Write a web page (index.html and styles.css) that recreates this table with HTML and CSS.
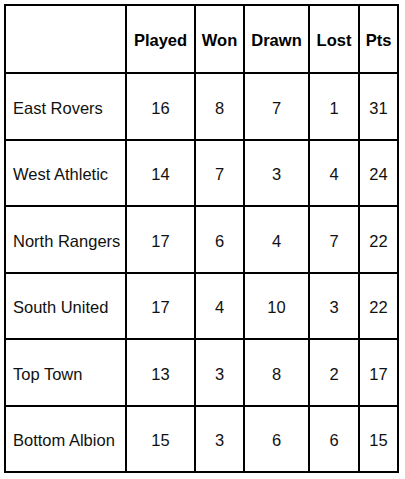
FILE: index.html
```html
<!DOCTYPE html>
<html>
<head>
<meta charset="utf-8">
<link rel="stylesheet" href="styles.css">
</head>
<body>
<table class="league">
  <colgroup>
    <col class="c-name"><col class="c-played"><col class="c-won"><col class="c-drawn"><col class="c-lost"><col class="c-pts">
  </colgroup>
  <thead>
    <tr class="head">
      <th></th><th>Played</th><th>Won</th><th>Drawn</th><th>Lost</th><th>Pts</th>
    </tr>
  </thead>
  <tbody>
    <tr class="r-a"><td class="name">East Rovers</td><td>16</td><td>8</td><td>7</td><td>1</td><td>31</td></tr>
    <tr class="r-b"><td class="name">West Athletic</td><td>14</td><td>7</td><td>3</td><td>4</td><td>24</td></tr>
    <tr class="r-a"><td class="name">North Rangers</td><td>17</td><td>6</td><td>4</td><td>7</td><td>22</td></tr>
    <tr class="r-b"><td class="name">South United</td><td>17</td><td>4</td><td>10</td><td>3</td><td>22</td></tr>
    <tr class="r-a"><td class="name">Top Town</td><td>13</td><td>3</td><td>8</td><td>2</td><td>17</td></tr>
    <tr class="r-b"><td class="name">Bottom Albion</td><td>15</td><td>3</td><td>6</td><td>6</td><td>15</td></tr>
  </tbody>
</table>
</body>
</html>
```

FILE: styles.css
```css
html, body {
  margin: 0;
  padding: 0;
  background: #fff;
}

.league {
  margin: 4px 0 0 4px;
  border-collapse: collapse;
  table-layout: fixed;
  width: 395px;
  font-family: "Liberation Sans", Arial, sans-serif;
  font-size: 16.5px;
  color: #111;
}

.c-name { width: 121px; }
.c-played { width: 69px; }
.c-won { width: 49px; }
.c-drawn { width: 65px; }
.c-lost { width: 50px; }
.c-pts { width: 39px; }

.league th,
.league td {
  border: 2px solid #000;
  padding: 3px 0 0 0;
  text-align: center;
  vertical-align: middle;
}

.league th {
  font-weight: bold;
  color: #000;
}

.league td.name {
  text-align: left;
  padding-left: 7px;
  white-space: nowrap;
}

.head { height: 68px; }
.r-a { height: 67px; }
.r-b { height: 66px; }
```
